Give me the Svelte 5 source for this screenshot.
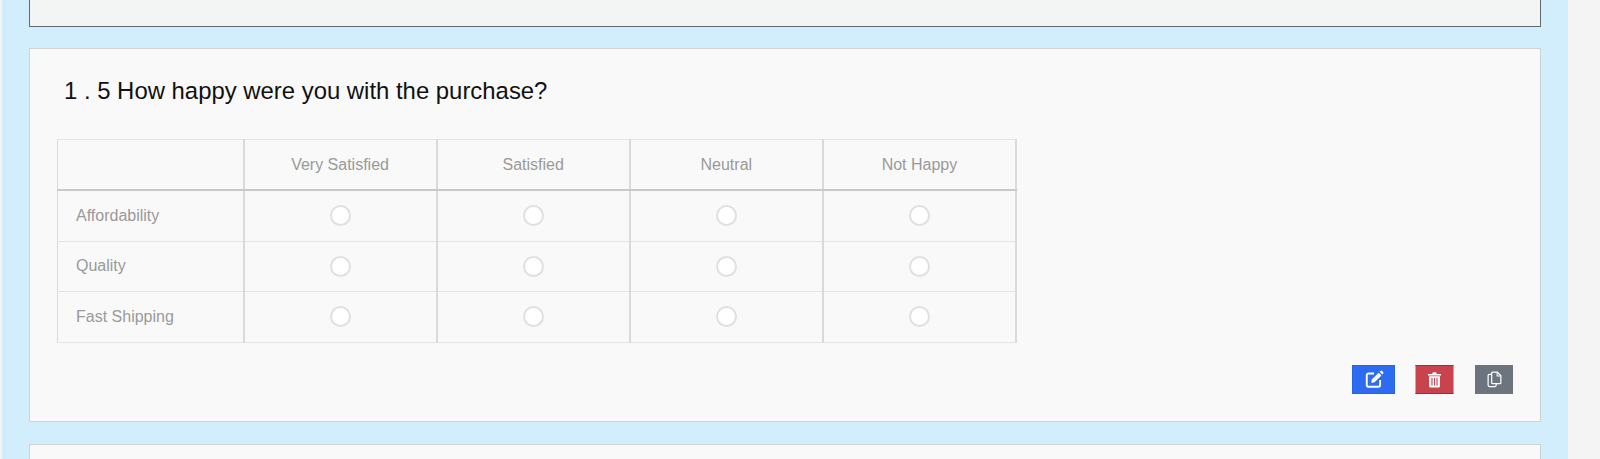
<script>
	const columns = ['Very Satisfied', 'Satisfied', 'Neutral', 'Not Happy'];
	const rows = ['Affordability', 'Quality', 'Fast Shipping'];
</script>

<div class="page">
	<main class="section">
		<div class="card previous"></div>

		<section class="card question">
			<h3>1 . 5 How happy were you with the purchase?</h3>

			<table>
				<thead>
					<tr>
						<th class="label"></th>
						{#each columns as column}
							<th>{column}</th>
						{/each}
					</tr>
				</thead>
				<tbody>
					{#each rows as row}
						<tr>
							<td class="label">{row}</td>
							{#each columns as column}
								<td><span class="radio" aria-label={column}></span></td>
							{/each}
						</tr>
					{/each}
				</tbody>
			</table>

			<div class="actions">
				<button class="btn edit" aria-label="Edit">
					<svg viewBox="0 0 18 18" width="20" height="20">
						<path d="M9 4H4a1.500 1.500 0 0 0-1.500 1.500v9A1.500 1.500 0 0 0 4 16h9a1.500 1.500 0 0 0 1.500-1.500V10" fill="none" stroke="currentColor" stroke-width="1.700" />
						<path d="M7 9.500 13.200 3.300l2.500 2.500L9.500 12 6.600 12.500z" fill="currentColor" />
						<path d="M14 2.500l.8-.8a1 1 0 0 1 1.400 0l1 1a1 1 0 0 1 0 1.400l-.8.800z" fill="currentColor" />
					</svg>
				</button>
				<button class="btn remove" aria-label="Delete">
					<svg viewBox="0 0 16 18" width="15" height="17">
						<path d="M1 3.200h14v1.600H1zM5.500 3.200 6.300 1.200h3.400l.8 2z" fill="currentColor" />
						<path d="M2.200 5.500h11.600v10.300A1.700 1.700 0 0 1 12.100 17.500H3.900A1.700 1.700 0 0 1 2.200 15.800z" fill="currentColor" />
						<path d="M5.300 7.500v8M8 7.500v8M10.700 7.500v8" stroke="#c9434f" stroke-width="1.200" />
					</svg>
				</button>
				<button class="btn copy" aria-label="Duplicate">
					<svg viewBox="0 0 16 18" width="15" height="17">
						<path d="M5 3.500H2.500A1.300 1.300 0 0 0 1.200 4.800v10.400a1.300 1.300 0 0 0 1.300 1.300h6a1.300 1.300 0 0 0 1.300-1.300V13.500" fill="none" stroke="currentColor" stroke-width="1.300" />
						<path d="M5 2.200A1 1 0 0 1 6 1.200h5l3.800 3.800v7.500a1 1 0 0 1-1 1H6a1 1 0 0 1-1-1z" fill="none" stroke="currentColor" stroke-width="1.300" />
						<path d="M10.800 1.200v4h4" fill="none" stroke="currentColor" stroke-width="1.100" />
					</svg>
				</button>
			</div>
		</section>

		<div class="card next"></div>
	</main>
</div>

<style>
	:global(body) {
		margin: 0;
		background: #f4f4f4;
	}

	.page {
		height: 459px;
		overflow: hidden;
		padding-left: 2px;
		font-family: 'Liberation Sans', Arial, sans-serif;
	}

	.section {
		width: 1566px;
		height: 459px;
		box-sizing: border-box;
		padding: 0 27px;
		background: #d2edfc;
		display: flex;
		flex-direction: column;
		gap: 22px;
	}

	.card {
		box-sizing: border-box;
		border: 1px solid #cfd2d3;
		background: #f9f9f9;
		flex: none;
	}

	.previous {
		height: 27px;
		margin-bottom: -1px;
		border: 1px solid #5f6b70;
		border-top: none;
		background: #f3f5f5;
	}

	.question {
		height: 374px;
		padding: 0 27px;
		display: flex;
		flex-direction: column;
	}

	.next {
		height: 40px;
	}

	h3 {
		margin: 28px 0 34px 7px;
		font-size: 23.900px;
		line-height: 28px;
		font-weight: 400;
		color: #111;
	}

	table {
		width: 960px;
		border-collapse: collapse;
		table-layout: fixed;
		font-size: 16px;
		color: #9a9a9a;
	}

	th,
	td {
		border: 1px solid #e2e4e5;
		border-left: 2px solid #dadada;
		border-right: 2px solid #dadada;
		text-align: center;
		vertical-align: middle;
		padding: 0;
		height: 49.500px;
		font-weight: 400;
	}

	th:first-child,
	td:first-child {
		border-left-width: 1px;
	}

	thead th {
		border-bottom: 2px solid #c9c9c9;
		height: 49px;
	}

	.label {
		width: 186px;
		text-align: left;
		padding-left: 18px;
		box-sizing: border-box;
	}

	.radio {
		display: block;
		box-sizing: border-box;
		width: 21px;
		height: 21px;
		margin: 0 auto;
		border: 2px solid #e0e0e0;
		border-radius: 50%;
		background: #fff;
	}

	.actions {
		display: flex;
		justify-content: flex-end;
		gap: 20px;
		margin-top: 22px;
	}

	.btn {
		height: 29px;
		padding: 0;
		border: 1px solid transparent;
		border-radius: 0;
		color: #fff;
		display: flex;
		align-items: center;
		justify-content: center;
	}

	.edit {
		width: 43px;
		background: #2d6cf0;
		border-color: #2563eb;
	}

	.remove {
		width: 39px;
		margin-right: 1px;
		background: #c9434f;
		border-color: #bd2130;
		border-left-color: #e89aa2;
		border-right-color: #e89aa2;
	}

	.copy {
		width: 38px;
		background: #6c757d;
		border-color: #6c757d;
	}
</style>
